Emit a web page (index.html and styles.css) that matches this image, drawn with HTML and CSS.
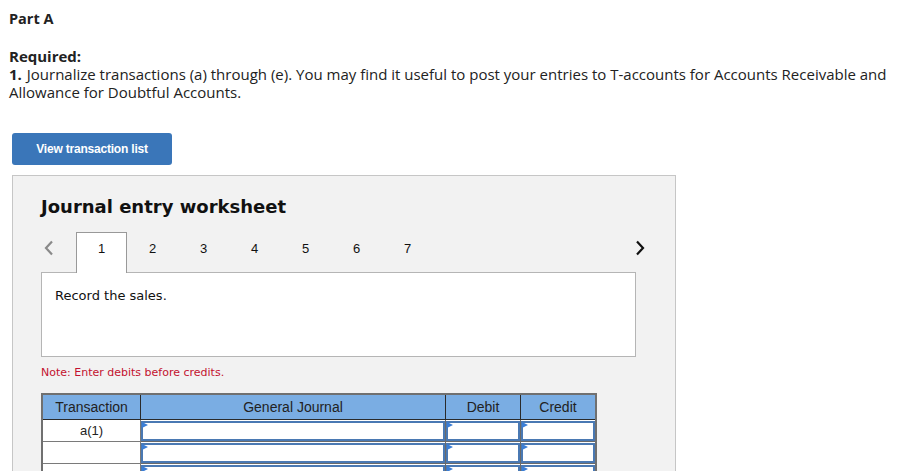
FILE: index.html
```html
<!DOCTYPE html>
<html>
<head>
<meta charset="utf-8">
<link rel="stylesheet" href="styles.css">
</head>
<body>
<div class="page">
  <div class="part">Part A</div>
  <div class="req">
    <div class="req-title">Required:</div>
    <div class="req-text"><b class="num">1.</b> Journalize transactions (a) through (e). You may find it useful to post your entries to T-accounts for Accounts Receivable and Allowance for Doubtful Accounts.</div>
  </div>
  <button class="btn">View transaction list</button>
  <div class="panel">
    <h2 class="title">Journal entry worksheet</h2>
    <div class="tabs">
      <span class="arrow left"><svg width="10" height="16" viewBox="0 0 10 16"><path d="M8 1.5 L2 8 L8 14.5" fill="none" stroke="#8a8a8a" stroke-width="2.2"/></svg></span>
      <div class="tablist">
        <div class="tab active">1</div>
        <div class="tab">2</div>
        <div class="tab">3</div>
        <div class="tab">4</div>
        <div class="tab">5</div>
        <div class="tab">6</div>
        <div class="tab">7</div>
      </div>
      <span class="arrow right"><svg width="10" height="16" viewBox="0 0 10 16"><path d="M2 1.5 L8 8 L2 14.5" fill="none" stroke="#111" stroke-width="2.2"/></svg></span>
    </div>
    <div class="content">Record the sales.</div>
    <div class="note">Note: Enter debits before credits.</div>
    <table class="journal">
      <thead>
        <tr><th class="c-tr">Transaction</th><th class="c-gj">General Journal</th><th class="c-amt">Debit</th><th class="c-amt">Credit</th></tr>
      </thead>
      <tbody>
        <tr><td class="tr">a(1)</td><td class="in"><div class="box"></div></td><td class="in"><div class="box"></div></td><td class="in"><div class="box"></div></td></tr>
        <tr><td class="tr"></td><td class="in"><div class="box"></div></td><td class="in"><div class="box"></div></td><td class="in"><div class="box"></div></td></tr>
        <tr><td class="tr"></td><td class="in"><div class="box"></div></td><td class="in"><div class="box"></div></td><td class="in"><div class="box"></div></td></tr>
      </tbody>
    </table>
  </div>
</div>
</body>
</html>
```

FILE: styles.css
```css
html, body {
  margin: 0;
  padding: 0;
  background: #fff;
  overflow: hidden;
}
.page {
  padding: 10px 0 0 9px;
  font-family: "Open Sans", Lato, sans-serif;
  color: #222;
}
.part {
  font-weight: bold;
  font-size: 14.5px;
  line-height: 18px;
}
.req {
  margin-top: 19px;
  font-size: 15px;
  line-height: 18px;
  width: 890px;
}
.req-title { font-weight: bold; }
.req-text .num {
  font-weight: bold;
  display: inline-block;
  margin-right: 1px;
}
.btn {
  display: block;
  margin: 32px 0 0 3px;
  width: 160px;
  height: 32px;
  background: #3a76b9;
  color: #fff;
  border: none;
  border-radius: 3px;
  font-family: "Liberation Sans", Arial, sans-serif;
  font-weight: bold;
  font-size: 12px;
  letter-spacing: -0.2px;
  padding: 0;
}
.panel {
  margin: 10px 0 0 3px;
  width: 664px;
  height: 320px;
  box-sizing: border-box;
  background: #f2f2f2;
  border: 1px solid #c6c6c6;
  padding: 0 0 0 28px;
}
.title {
  margin: 18px 0 0 0;
  font-family: "DejaVu Sans", Verdana, sans-serif;
  font-weight: bold;
  font-size: 18px;
  line-height: 26px;
  color: #111;
}
.tabs {
  margin-top: 12px;
  display: flex;
  align-items: flex-start;
  height: 40px;
  width: 604px;
}
.arrow {
  display: flex;
  height: 32px;
  align-items: center;
}
.arrow.left { margin-left: 3px; width: 32px; }
.arrow.right { margin-left: auto; }
.tablist { display: flex; }
.tab {
  width: 51px;
  height: 40px;
  box-sizing: border-box;
  text-align: center;
  font-family: "Liberation Sans", Arial, sans-serif;
  font-size: 13px;
  line-height: 33px;
  color: #111;
}
.tab.active {
  background: #fff;
  border: 1px solid #999;
  border-bottom: none;
  position: relative;
  z-index: 1;
  height: 41px;
  line-height: 32px;
}
.content {
  width: 595px;
  height: 85px;
  box-sizing: border-box;
  background: #fff;
  border: 1px solid #b5b5b5;
  padding: 15px 0 0 13px;
  font-family: "DejaVu Sans", Verdana, sans-serif;
  font-size: 13px;
  color: #111;
}
.note {
  margin-top: 9px;
  font-family: "DejaVu Sans", Verdana, sans-serif;
  font-size: 11px;
  line-height: 14px;
  color: #c3112f;
}
.journal {
  margin-top: 13px;
  border-collapse: collapse;
  width: 552px;
  font-family: "Liberation Sans", Arial, sans-serif;
  font-size: 14px;
  table-layout: fixed;
  border: 2px solid #707070;
}
.journal th {
  background: #7aade3;
  color: #222;
  font-weight: normal;
  height: 24px;
  padding: 0;
  border: 1px solid #2a2a2a;
  border-top: 2px solid #707070;
}
.journal th:first-child { border-left: 2px solid #707070; }
.journal th:last-child { border-right: 2px solid #707070; }
.c-tr { width: 97px; }
.c-gj { width: 304px; }
.c-amt { width: 74px; }
.journal td {
  padding: 0;
  height: 21px;
  border: 1px solid #7a7a7a;
  background: #fff;
}
.journal td.tr {
  text-align: center;
  color: #222;
  font-size: 13px;
}
.journal td.in {
  border: 1px solid #6a6a6a;
  background: #fff;
}
.box {
  height: 20px;
  box-sizing: border-box;
  border: 2px solid #4a79b3;
  position: relative;
  background: #fff;
}
.box::before {
  content: "";
  position: absolute;
  left: -1px;
  top: -1px;
  border-left: 6px solid #3b7ed6;
  border-top: 3px solid transparent;
  border-bottom: 3px solid transparent;
}
```
